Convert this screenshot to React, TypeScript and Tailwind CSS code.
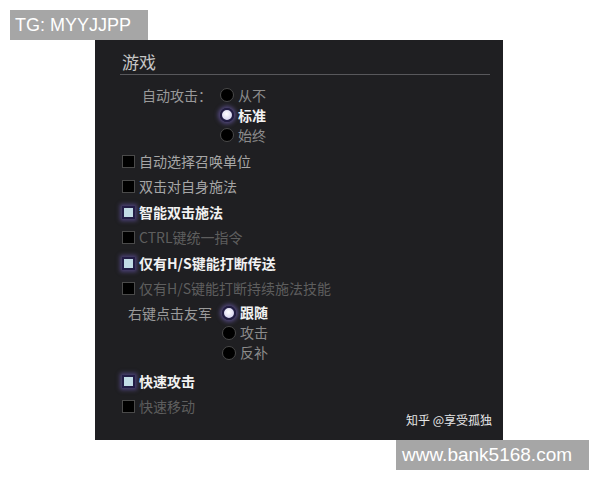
import React from "react";

type Tone = "on" | "off" | "dim";

const textTone: Record<Tone, string> = {
  on: "text-[#f2f2f2] font-bold",
  off: "text-[#a6a6a6]",
  dim: "text-[#5e5e5e]",
};

function Radio({ checked }: { checked?: boolean }) {
  if (checked) {
    return (
      <span className="w-[14px] h-[14px] rounded-full border-2 border-[#221d44] bg-[radial-gradient(circle_at_45%_40%,#ffffff,#c9c6ea)] shadow-[0_0_4px_2px_rgba(130,110,210,0.55)] shrink-0" />
    );
  }
  return <span className="w-[14px] h-[14px] rounded-full border border-[#4a4a4a] bg-black shrink-0" />;
}

function Check({ checked }: { checked?: boolean }) {
  if (checked) {
    return (
      <span className="w-[13px] h-[13px] border-2 border-[#231d46] bg-[#c2dce6] shadow-[0_0_4px_2px_rgba(120,100,200,0.5)] shrink-0" />
    );
  }
  return <span className="w-[13px] h-[13px] border border-[#4a4a4a] bg-black shrink-0" />;
}

function RadioGroup({ label, options, selected, labelW, indent }: { label: string; options: string[]; selected: number; labelW: string; indent: string }) {
  return (
    <div className={`flex ${indent}`}>
      <div className={`${labelW} h-[20px] leading-[20px] text-[#9a9a9a] shrink-0 whitespace-nowrap`}>{label}</div>
      <div className="flex flex-col">
        {options.map((o, i) => (
          <div key={o} className="h-[20px] flex items-center gap-[4px]">
            <Radio checked={i === selected} />
            <span className={i === selected ? textTone.on : "text-[#8c8c8c]"}>{o}</span>
          </div>
        ))}
      </div>
    </div>
  );
}

function CheckRow({ text, tone }: { text: string; tone: Tone }) {
  return (
    <div className="h-[25.5px] flex items-center gap-[4px] pl-[2px] whitespace-nowrap">
      <Check checked={tone === "on"} />
      <span className={textTone[tone]}>{text}</span>
    </div>
  );
}

export default function App() {
  return (
    <div className="relative w-[600px] h-[480px] bg-white overflow-hidden font-['Noto_Sans_CJK_SC','Noto_Sans',sans-serif] text-[14px]">
      <div className="absolute left-[10px] top-[10px] w-[138px] h-[30px] bg-[#a6a6a6] text-white text-[18px] leading-[30px] pl-[5px] font-['Liberation_Sans',sans-serif]">
        TG: MYYJJPP
      </div>

      <div className="ml-[95px] pt-[40px]">
        <div className="relative w-[408px] h-[400px] bg-[#1f1f22] pt-[10px] pl-[25px] pr-[13px]">
          <div className="h-[25px] text-[17px] leading-[24px] text-[#c6c6c6] border-b border-[#58585c]">
            <span className="pl-[2px]">游戏</span>
          </div>

          <div className="mt-[10px]">
            <RadioGroup label="自动攻击：" options={["从不", "标准", "始终"]} selected={1} labelW="w-[78px]" indent="pl-[22px]" />
          </div>

          <div className="mt-[3.5px]">
            <CheckRow text="自动选择召唤单位" tone="off" />
            <CheckRow text="双击对自身施法" tone="off" />
            <CheckRow text="智能双击施法" tone="on" />
            <CheckRow text="CTRL键统一指令" tone="dim" />
            <CheckRow text="仅有H/S键能打断传送" tone="on" />
            <CheckRow text="仅有H/S键能打断持续施法技能" tone="dim" />
          </div>

          <div className="mt-[1px]">
            <RadioGroup label="右键点击友军" options={["跟随", "攻击", "反补"]} selected={0} labelW="w-[94px]" indent="pl-[8px]" />
          </div>

          <div className="mt-[6px]">
            <CheckRow text="快速攻击" tone="on" />
            <CheckRow text="快速移动" tone="dim" />
          </div>

          <div className="absolute right-[11px] bottom-[11px] text-[12px] text-[#e6e6e6]">知乎 @享受孤独</div>
        </div>
      </div>

      <div className="absolute left-[396px] top-[440px] w-[193px] h-[30px] bg-[#a6a6a6] text-white text-[19px] leading-[30px] pl-[6px] font-['Liberation_Sans',sans-serif]">
        www.bank5168.com
      </div>
    </div>
  );
}
